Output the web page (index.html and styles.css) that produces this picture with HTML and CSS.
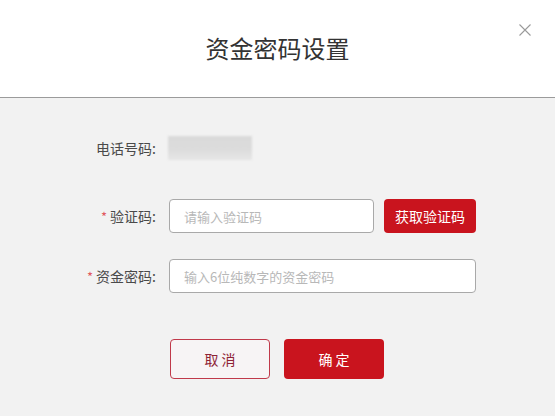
FILE: index.html
```html
<!DOCTYPE html>
<html lang="zh-CN">
<head>
<meta charset="utf-8">
<title>资金密码设置</title>
<link rel="stylesheet" href="styles.css">
</head>
<body>
<div class="dialog">
  <div class="header">
    <h1 class="title">资金密码设置</h1>
    <button class="close" aria-label="关闭">
      <svg width="12" height="12" viewBox="0 0 12 12"><path d="M0.5 0.5 L11.5 11.5 M11.5 0.5 L0.5 11.5" stroke="#9a9a9a" stroke-width="1.1" fill="none"/></svg>
    </button>
  </div>
  <div class="body">
    <div class="row row-phone">
      <label class="label">电话号码:</label>
      <div class="phone"><span class="blur"></span></div>
    </div>
    <div class="row row-code">
      <label class="label"><span class="star">*</span> 验证码:</label>
      <div class="field">
        <input class="input code-input" type="text" placeholder="请输入验证码">
        <button class="btn-code">获取验证码</button>
      </div>
    </div>
    <div class="row row-pwd">
      <label class="label"><span class="star">*</span> 资金密码:</label>
      <div class="field">
        <input class="input pwd-input" type="password" placeholder="输入6位纯数字的资金密码">
      </div>
    </div>
    <div class="actions">
      <button class="btn btn-cancel">取 消</button>
      <button class="btn btn-ok">确 定</button>
    </div>
  </div>
</div>
</body>
</html>
```
FILE: styles.css
```css
html, body {
  margin: 0;
  padding: 0;
  background: #f2f2f2;
  font-family: "Microsoft YaHei", "Noto Sans CJK SC", "Noto Sans", sans-serif;
}
.dialog {
  width: 555px;
  height: 416px;
  background: #f2f2f2;
}
.header {
  position: relative;
  height: 97px;
  background: #fff;
  border-bottom: 1px solid #9b9b9b;
  display: flex;
  align-items: center;
  justify-content: center;
}
.title {
  margin: 0;
  font-size: 24px;
  font-weight: normal;
  color: #333;
  line-height: 1;
  padding-bottom: 2px;
}
.close {
  position: absolute;
  top: 24px;
  right: 24px;
  width: 12px;
  height: 12px;
  padding: 0;
  border: 0;
  background: none;
  display: flex;
}
.body {
  padding-top: 33px;
}
.row {
  display: flex;
  align-items: center;
  height: 34px;
}
.row-code { margin-top: 34px; }
.row-pwd { margin-top: 26px; }
.label {
  width: 156px;
  flex: none;
  text-align: right;
  font-size: 14px;
  color: #4a4a4a;
  padding-right: 13px;
  box-sizing: content-box;
}
.star {
  color: #e0595f;
  font-size: 13px;
}
.phone {
  display: flex;
  align-items: center;
}
.blur {
  display: block;
  width: 84px;
  height: 24px;
  background: linear-gradient(180deg, #dadada 0%, #dcdcdc 55%, #e6e6e6 100%);
  filter: blur(1px);
  margin-left: -1px;
}
.field {
  display: flex;
  align-items: center;
}
.input {
  box-sizing: border-box;
  height: 34px;
  border: 1px solid #a9a9a9;
  border-radius: 4px;
  background: #fff;
  padding: 0 14px;
  font-size: 13px;
  font-family: inherit;
  color: #333;
  outline: none;
}
.input::placeholder { color: #b8b8b8; }
.code-input { width: 205px; }
.pwd-input { width: 307px; }
.btn-code {
  margin-left: 10px;
  width: 92px;
  height: 34px;
  border: 0;
  border-radius: 4px;
  background: #c9141e;
  color: #fff;
  font-size: 14px;
  font-family: inherit;
  padding: 0;
}
.actions {
  display: flex;
  justify-content: center;
  gap: 14px;
  margin-top: 46px;
  padding-right: 1px;
}
.btn {
  box-sizing: border-box;
  width: 100px;
  height: 40px;
  border-radius: 4px;
  font-size: 14px;
  font-family: inherit;
  padding: 0;
}
.btn-cancel {
  background: #f7f4f5;
  border: 1px solid #c0394a;
  color: #8e2335;
}
.btn-ok {
  background: #c9141e;
  border: 0;
  color: #fff;
}
```
